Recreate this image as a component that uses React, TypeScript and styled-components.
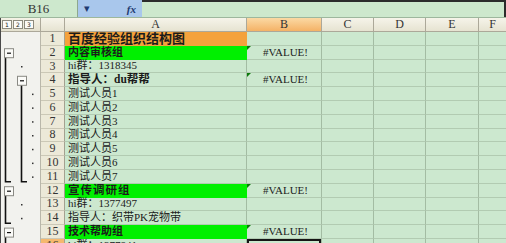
import styled, { createGlobalStyle } from "styled-components";

const ROW_H = 13.8;
const ROW_COUNT = 16;

const GlobalStyle = createGlobalStyle`
  html, body {
    margin: 0;
    padding: 0;
    background: #cce8cf;
    overflow: hidden;
  }
`;

const Window = styled.div`
  width: 506px;
  height: 243px;
  overflow: hidden;
  background: #cce8cf;
  font-family: "Liberation Serif", "Noto Sans CJK SC", serif;
  color: #1b1b1b;
`;

const FormulaBar = styled.div`
  height: 18px;
  display: flex;
  box-sizing: border-box;
  border-bottom: 1px solid #9db79d;
  background: #cde8cd;
`;

const NameBox = styled.div`
  width: 78px;
  display: flex;
  align-items: center;
  justify-content: center;
  font-size: 13px;
  color: #333;
  border-right: 1px solid #8ea88e;
  box-sizing: border-box;
`;

const Tools = styled.div`
  width: 64px;
  display: flex;
  align-items: center;
  justify-content: space-between;
  padding: 0 6px 0 6px;
  box-sizing: border-box;
  background: #a9c7ec;
  color: #1e3a70;
  font-size: 11px;
`;

const Fx = styled.span`
  font-style: italic;
  font-weight: bold;
  font-size: 11px;
`;

const FormulaInput = styled.div`
  flex: 1;
  border-top: 2px solid #2c2c2c;
  border-right: 2px solid #2c2c2c;
  box-sizing: border-box;
`;

const Sheet = styled.div`
  display: grid;
  grid-template-columns: 40px 24px 182px 75px 52px 52px 53px 28px;
  grid-template-rows: 14px repeat(${ROW_COUNT}, ${ROW_H}px);
  border-left: 1px solid #4a4a4a;
`;

const LevelCorner = styled.div`
  display: flex;
  align-items: center;
  gap: 1px;
  padding-left: 1px;
  background: linear-gradient(#f4f2e6, #e4e1cf);
  border-right: 1px solid #aca899;
  border-bottom: 1px solid #aca899;
  box-sizing: border-box;
`;

const LevelButton = styled.span`
  width: 10px;
  height: 9px;
  box-sizing: border-box;
  border: 1px solid #8d8b7e;
  background: #fbfbf7;
  font-family: "DejaVu Sans", sans-serif;
  font-size: 6px;
  line-height: 7px;
  text-align: center;
  color: #222;
`;

const ColHeader = styled.div<{ $active?: boolean }>`
  display: flex;
  align-items: center;
  justify-content: center;
  font-size: 12px;
  color: #333;
  background: ${(p) =>
    p.$active
      ? "linear-gradient(#fbd9a4, #f4b266)"
      : "linear-gradient(#f6f4ea, #e6e3d1)"};
  border-right: 1px solid #aca899;
  border-bottom: 1px solid #aca899;
  box-sizing: border-box;
`;

const Gutter = styled.div`
  grid-column: 1;
  grid-row: 2 / span ${ROW_COUNT};
  background: #f2f2ee;
  border-right: 1px solid #b9b7aa;
  box-sizing: border-box;
`;

const RowNum = styled.div<{ $active?: boolean }>`
  grid-column: 2;
  display: flex;
  align-items: center;
  justify-content: center;
  font-size: 12px;
  color: #333;
  background: ${(p) => (p.$active ? "#f5b86e" : "#ece9d8")};
  border-right: 1px solid #a4a190;
  border-bottom: 1px solid #cbc8b6;
  box-sizing: border-box;
`;

const Cell = styled.div<{
  $fill?: string;
  $bold?: boolean;
  $size?: number;
  $spacing?: number;
  $center?: boolean;
  $selected?: boolean;
}>`
  position: relative;
  display: flex;
  align-items: flex-end;
  justify-content: ${(p) => (p.$center ? "center" : "flex-start")};
  padding: 0 0 0 3px;
  white-space: nowrap;
  overflow: visible;
  font-size: ${(p) => p.$size ?? 11}px;
  line-height: 13px;
  font-weight: ${(p) => (p.$bold ? 700 : 400)};
  letter-spacing: ${(p) => p.$spacing ?? 0}px;
  background: ${(p) => p.$fill ?? "#cce8cf"};
  border-right: 1px solid ${(p) => (p.$fill ? p.$fill : "#a3bca3")};
  border-bottom: 1px solid ${(p) => (p.$fill ? p.$fill : "#b2cbb2")};
  box-shadow: ${(p) => (p.$selected ? "inset 0 0 0 2px #151515" : "none")};
  box-sizing: border-box;
  z-index: ${(p) => (p.$selected ? 1 : 0)};
`;

const ErrorMark = styled.span`
  position: absolute;
  left: 0;
  top: 0;
  width: 0;
  height: 0;
  border-top: 4px solid #0a7a0a;
  border-right: 4px solid transparent;
`;

type Row = {
  a: string;
  b?: string;
  fill?: string;
  bold?: boolean;
  size?: number;
  spacing?: number;
};

const ORANGE = "#f4a23c";
const GREEN = "#00f000";

const rows: Row[] = [
  { a: "百度经验组织结构图", fill: ORANGE, bold: true, size: 13 },
  { a: "内容审核组", b: "#VALUE!", fill: GREEN, bold: true },
  { a: "hi群：1318345" },
  { a: "指导人：du帮帮", b: "#VALUE!", bold: true, size: 11.5 },
  { a: "测试人员1" },
  { a: "测试人员2" },
  { a: "测试人员3" },
  { a: "测试人员4" },
  { a: "测试人员5" },
  { a: "测试人员6" },
  { a: "测试人员7" },
  { a: "宣传调研组", b: "#VALUE!", fill: GREEN, bold: true, size: 11.5, spacing: 1 },
  { a: "hi群：1377497" },
  { a: "指导人：织带PK宠物带" },
  { a: "技术帮助组", b: "#VALUE!", fill: GREEN, bold: true },
  { a: "hi群：1377841" },
];

const SELECTED_ROW = 16;

function center(row: number) {
  return (row - 0.5) * ROW_H;
}

function OutlineButton({ x, row }: { x: number; row: number }) {
  const y = center(row) - 4.5;
  return (
    <g>
      <rect x={x + 0.5} y={y + 0.5} width={9} height={9} fill="#fbfbf8" stroke="#8a8a84" />
      <line x1={x + 3} x2={x + 7} y1={y + 5} y2={y + 5} stroke="#111" strokeWidth={1.2} />
    </g>
  );
}

function Dot({ x, row }: { x: number; row: number }) {
  return <rect x={x} y={center(row) - 0.5} width={1.5} height={1.5} fill="#333" />;
}

function Outline() {
  const h = ROW_COUNT * ROW_H;
  const foot11 = 11 * ROW_H - 2;
  const foot14 = 14 * ROW_H - 2;
  return (
    <svg width={39} height={h} viewBox={`0 0 39 ${h}`}>
      <g stroke="#111" strokeWidth={1.6} fill="none">
        <polyline points={`4.5,${center(2) + 4} 4.5,${foot11} 10,${foot11}`} />
        <polyline points={`20.5,${center(4) + 4} 20.5,${foot11} 26,${foot11}`} />
        <polyline points={`4.5,${center(12) + 4} 4.5,${foot14} 10,${foot14}`} />
        <polyline points={`4.5,${center(15) + 4} 4.5,${h}`} />
      </g>
      <OutlineButton x={3} row={2} />
      <OutlineButton x={16} row={4} />
      <OutlineButton x={3} row={12} />
      <OutlineButton x={3} row={15} />
      <Dot x={20} row={3} />
      {[5, 6, 7, 8, 9, 10, 11].map((r) => (
        <Dot key={r} x={31} row={r} />
      ))}
      <Dot x={20} row={13} />
      <Dot x={20} row={14} />
    </svg>
  );
}

export default function App() {
  return (
    <Window>
      <GlobalStyle />
      <FormulaBar>
        <NameBox>B16</NameBox>
        <Tools>
          <span>▾</span>
          <Fx>fx</Fx>
        </Tools>
        <FormulaInput />
      </FormulaBar>
      <Sheet>
        <LevelCorner>
          <LevelButton>1</LevelButton>
          <LevelButton>2</LevelButton>
          <LevelButton>3</LevelButton>
        </LevelCorner>
        <ColHeader />
        <ColHeader>A</ColHeader>
        <ColHeader $active>B</ColHeader>
        <ColHeader>C</ColHeader>
        <ColHeader>D</ColHeader>
        <ColHeader>E</ColHeader>
        <ColHeader>F</ColHeader>
        <Gutter>
          <Outline />
        </Gutter>
        {rows.map((r, i) => {
          const n = i + 1;
          return [
            <RowNum key={`n${n}`} $active={n === SELECTED_ROW}>
              {n}
            </RowNum>,
            <Cell
              key={`a${n}`}
              $fill={r.fill}
              $bold={r.bold}
              $size={r.size}
              $spacing={r.spacing}
            >
              {r.a}
            </Cell>,
            <Cell key={`b${n}`} $center $selected={n === SELECTED_ROW}>
              {r.b && <ErrorMark />}
              {r.b}
            </Cell>,
            <Cell key={`c${n}`} />,
            <Cell key={`d${n}`} />,
            <Cell key={`e${n}`} />,
            <Cell key={`f${n}`} />,
          ];
        })}
      </Sheet>
    </Window>
  );
}
